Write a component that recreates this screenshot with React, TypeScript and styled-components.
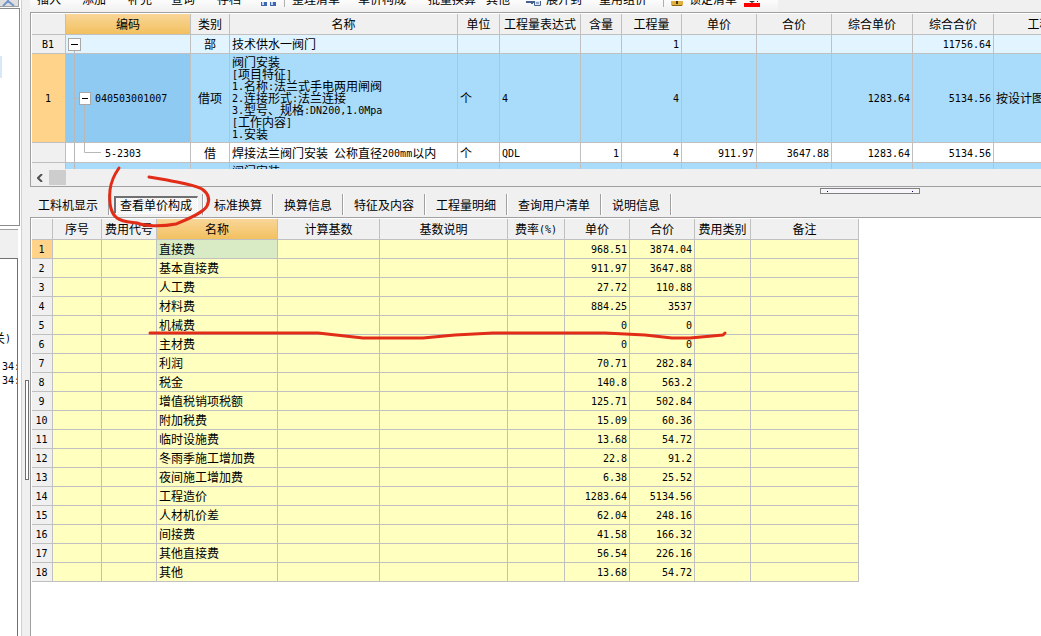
import React from "react";
import styled, { createGlobalStyle } from "styled-components";

const GlobalStyle = createGlobalStyle`
  * { box-sizing: border-box; }
  html, body, #root { height: 100%; }
  body {
    margin: 0;
    overflow: hidden;
    background: #f0f0f0;
    color: #000;
    font: 12px/16px "Noto Sans CJK SC", sans-serif;
  }
  button { font: inherit; color: inherit; background: none; border: 0; padding: 0; }
`;

const Shell = styled.div`
  position: relative;
  display: flex;
  height: 100%;
  overflow: hidden;
`;

const Sidebar = styled.aside`
  display: flex;
  flex-direction: column;
  flex: none;
  width: 22px;
  background: #fff;
  border-right: 1px solid #d0d0d0;
`;

const CollapseButton = styled.button`
  display: flex;
  align-items: flex-end;
  width: 19px;
  height: 7px;
  overflow: hidden;
  background: #dfdfdf;
  border-right: 1px solid #a0a0a0;
  border-bottom: 1px solid #a0a0a0;
`;

const TreePanel = styled.div`
  width: 20px;
  height: 218px;
  margin-top: 1px;
  padding-top: 47px;
  border: solid #8a8a8a;
  border-width: 1px 1px 1px 0;
`;

const TreeSelection = styled.div`
  width: 2px;
  height: 22px;
  background: #d9e8f7;
`;

const PanelHeading = styled.div`
  width: 18px;
  height: 29px;
  margin-top: 3px;
  background: #f0f0f0;
  border-top: 1px solid #a0a0a0;
`;

const NotesPanel = styled.div`
  flex: 1;
  width: 18px;
  padding-top: 72px;
  overflow: hidden;
  border: solid #707070;
  border-width: 1px 1px 0 0;
  line-height: 14px;
`;

const NoteLine = styled.div`
  height: 14px;
  padding-left: 2px;
  overflow: hidden;
  white-space: nowrap;
`;

const NoteTail = styled(NoteLine)`
  display: flex;
  justify-content: flex-end;
  margin-bottom: 14px;
  padding: 0 6px 0 0;
`;

const VerticalSplitter = styled.div`
  flex: none;
  width: 8px;
  padding: 380px 1px 0 3px;
`;

const VerticalGrip = styled.div`
  height: 100px;
  border: 1px solid #707070;
  background: #fff;
`;

const Main = styled.main`
  display: flex;
  flex: 1;
  flex-direction: column;
  min-width: 0;
`;

const Toolbar = styled.div`
  display: flex;
  flex: none;
  align-items: flex-end;
  width: 748px;
  height: 12px;
  padding: 0 0 5px 7px;
  overflow: hidden;
  background: linear-gradient(#fcfcfc, #f0f0f0);
`;

const ToolButton = styled.button<{ $slot: number }>`
  flex: none;
  width: ${(p) => p.$slot}px;
  height: 16px;
  text-align: left;
  white-space: nowrap;
`;

const ToolIcon = styled.button<{ $slot: number }>`
  display: flex;
  flex: none;
  align-items: flex-end;
  width: ${(p) => p.$slot}px;
`;

const ToolSeparator = styled.span`
  flex: none;
  width: 8px;
  height: 7px;
  border-left: 1px solid #b0b0b0;
`;

const GridPanel = styled.section`
  flex: none;
  border: solid #a0a0a0;
  border-width: 1px 0 1px 1px;
`;

const GridClip = styled.div`
  height: 156px;
  padding: 1px 0 0 1px;
  overflow: hidden;
  background: #fff;
`;

const Table = styled.table<{ $width: number }>`
  width: ${(p) => p.$width}px;
  table-layout: fixed;
  border-collapse: separate;
  border-spacing: 0;
`;

const HeadCell = styled.th<{ $active?: boolean }>`
  height: 21px;
  padding: 0;
  overflow: hidden;
  font-weight: 400;
  line-height: 18px;
  white-space: nowrap;
  background: ${(p) => (p.$active ? "linear-gradient(#f9d698, #f2c05f)" : "#f0f0f0")};
  border: solid #c0c0c0;
  border-width: 0 1px 1px 0;
`;

const Cell = styled.td<{ $bg: string; $h: number; $align?: string }>`
  height: ${(p) => p.$h}px;
  padding: 0 2px;
  overflow: hidden;
  line-height: 12px;
  text-align: ${(p) => p.$align ?? "left"};
  white-space: pre;
  background: ${(p) => p.$bg};
  border: solid #c0c0c0;
  border-width: 0 1px 1px 0;
`;

const RowHead = styled.th<{ $active?: boolean }>`
  padding: 0 1px 0 0;
  font-weight: 400;
  line-height: 12px;
  background: ${(p) => (p.$active ? "#ffd48a" : "#f0f0f0")};
  border: solid #c0c0c0;
  border-width: 0 1px 1px 0;
`;

const TreeCell = styled(Cell)`
  padding: 0;
`;

const TreeContent = styled.div`
  display: flex;
  align-items: center;
`;

const Narrow = styled.span`
  font-family: "DejaVu Sans Mono", monospace;
  font-size: 10px;
  line-height: 0;
  vertical-align: 1px;
`;

const ScrollBar = styled.div`
  display: flex;
  align-items: center;
  height: 17px;
  padding-left: 6px;
  gap: 5px;
  background: #f0f0f0;
`;

const ScrollArrow = styled.button`
  display: flex;
  width: 7px;
`;

const ScrollThumb = styled.div`
  width: 17px;
  height: 15px;
  background: #cdcdcd;
`;

const HorizontalSplitter = styled.div`
  flex: none;
  height: 7px;
  padding: 1px 0 0 790px;
`;

const HorizontalGrip = styled.div`
  display: flex;
  align-items: center;
  justify-content: space-between;
  width: 100px;
  height: 6px;
  padding: 0 6px;
  background: #f8f6fa;
  border: 1px solid #808080;
`;

const GripDot = styled.span`
  width: 1px;
  height: 1px;
  background: #000080;
`;

const TabStrip = styled.div`
  display: flex;
  flex: none;
  height: 23px;
  padding-bottom: 2px;
`;

const TabSlot = styled.div`
  display: flex;
  align-items: center;
  padding: 0 4px 0 5px;
  border-right: 1px solid #a0a0a0;
  box-shadow: 1px 0 #fff;
  &:first-child { padding-left: 2px; }
`;

const Tab = styled.button<{ $selected?: boolean }>`
  height: 18px;
  padding: ${(p) => (p.$selected ? "0 5px 0 4px" : "0 5px")};
  line-height: 14px;
  white-space: nowrap;
  border: solid transparent;
  border-width: 2px 1px 1px 1px;
  ${(p) =>
    p.$selected &&
    `background: repeating-conic-gradient(#fff 0 25%, #f0f0f0 0 50%) 0 0 / 2px 2px;
     border-color: #707070 #fff #fff #707070;
     border-left-width: 2px;`}
`;

const DetailPanel = styled.section`
  flex: 1;
  min-height: 0;
  padding: 1px 0 0 1px;
  overflow: hidden;
  background: #fff;
  border: solid #a0a0a0;
  border-width: 1px 0 0 1px;
`;

const Annotation = styled.svg`
  position: absolute;
  top: 0;
  left: 0;
  pointer-events: none;
`;

/* Half-width characters take exactly half of a full-width one. */
function Text({ children }: { children: string }) {
  return (
    <span>
      {children.split(/([\x20-\x7e]+)/).map((part, i) =>
        i % 2 ? <Narrow key={i}>{part}</Narrow> : part
      )}
    </span>
  );
}

type ColumnDef = { label: string; width: number; align?: string };

const billColumns: ColumnDef[] = [
  { label: "", width: 34 },
  { label: "编码", width: 125 },
  { label: "类别", width: 39, align: "center" },
  { label: "名称", width: 228 },
  { label: "单位", width: 42 },
  { label: "工程量表达式", width: 81 },
  { label: "含量", width: 41, align: "right" },
  { label: "工程量", width: 60, align: "right" },
  { label: "单价", width: 75, align: "right" },
  { label: "合价", width: 75, align: "right" },
  { label: "综合单价", width: 81, align: "right" },
  { label: "综合合价", width: 81, align: "right" },
  { label: "工程量计算规则", width: 152 },
];

const description = [
  "阀门安装",
  "[项目特征]",
  "1.名称:法兰式手电两用闸阀",
  "2.连接形式:法兰连接",
  "3.型号、规格:DN200,1.0Mpa",
  "[工作内容]",
  "1.安装",
].join("\n");

type BillRow = { head: string; h: number; bg: string; codeBg: string; code: string; cells: string[] };

const billRows: BillRow[] = [
  { head: "B1", h: 19, bg: "#e1f4ff", codeBg: "#e1f4ff", code: "", cells: ["部", "技术供水一阀门", "", "", "", "1", "", "", "", "11756.64", ""] },
  { head: "1", h: 89, bg: "#a9dbfa", codeBg: "#8fcaf2", code: "040503001007", cells: ["借项", description, "个", "4", "", "4", "", "", "1283.64", "5134.56", "按设计图示数量计算"] },
  { head: "", h: 20, bg: "#fff", codeBg: "#fff", code: "5-2303", cells: ["借", "焊接法兰阀门安装 公称直径200mm以内", "个", "QDL", "1", "4", "911.97", "3647.88", "1283.64", "5134.56", ""] },
  { head: "", h: 16, bg: "#a9dbfa", codeBg: "#a9dbfa", code: "", cells: ["", "阀门安装", "", "", "", "", "", "", "", "", ""] },
];

const guide = { stroke: "#b8b8b8", fill: "none" };

const treeGuides = [
  <svg width="29" height="18" viewBox="0 0 29 18">
    <path d="M8.5 15V18" {...guide} />
    <rect x="2.5" y="3.5" width="12" height="12" fill="#fff" stroke="#a8a8a8" />
    <path d="M5 9.5h7" stroke="#000" />
  </svg>,
  <svg width="29" height="88" viewBox="0 0 29 88">
    <path d="M8.5 0V88M8.5 44.5H13M18.5 50V88" {...guide} />
    <rect x="13.5" y="38.5" width="11" height="12" fill="#fff" stroke="#a8a8a8" />
    <path d="M16 44.5h6" stroke="#000" />
  </svg>,
  <svg width="39" height="19" viewBox="0 0 39 19">
    <path d="M8.5 0V19M18.5 0V9.5H35" {...guide} />
  </svg>,
  <svg width="29" height="15" viewBox="0 0 29 15">
    <path d="M8.5 0V15" {...guide} />
  </svg>,
];

const feeColumns: ColumnDef[] = [
  { label: "", width: 21 },
  { label: "序号", width: 49 },
  { label: "费用代号", width: 55 },
  { label: "名称", width: 121 },
  { label: "计算基数", width: 102 },
  { label: "基数说明", width: 128 },
  { label: "费率(%)", width: 57 },
  { label: "单价", width: 65, align: "right" },
  { label: "合价", width: 65, align: "right" },
  { label: "费用类别", width: 56 },
  { label: "备注", width: 108 },
];

const fees: [string, string, string][] = [
  ["直接费", "968.51", "3874.04"],
  ["基本直接费", "911.97", "3647.88"],
  ["人工费", "27.72", "110.88"],
  ["材料费", "884.25", "3537"],
  ["机械费", "0", "0"],
  ["主材费", "0", "0"],
  ["利润", "70.71", "282.84"],
  ["税金", "140.8", "563.2"],
  ["增值税销项税额", "125.71", "502.84"],
  ["附加税费", "15.09", "60.36"],
  ["临时设施费", "13.68", "54.72"],
  ["冬雨季施工增加费", "22.8", "91.2"],
  ["夜间施工增加费", "6.38", "25.52"],
  ["工程造价", "1283.64", "5134.56"],
  ["人材机价差", "62.04", "248.16"],
  ["间接费", "41.58", "166.32"],
  ["其他直接费", "56.54", "226.16"],
  ["其他", "13.68", "54.72"],
];

const tabs = ["工料机显示", "查看单价构成", "标准换算", "换算信息", "特征及内容", "工程量明细", "查询用户清单", "说明信息"];

function TableHead({ columns, active }: { columns: ColumnDef[]; active: string }) {
  return (
    <>
      <colgroup>
        {columns.map((c, i) => (
          <col key={i} width={c.width} />
        ))}
      </colgroup>
      <thead>
        <tr>
          {columns.map((c, i) => (
            <HeadCell key={i} scope="col" $active={c.label === active}>
              <Text>{c.label}</Text>
            </HeadCell>
          ))}
        </tr>
      </thead>
    </>
  );
}

const totalWidth = (columns: ColumnDef[]) => columns.reduce((sum, c) => sum + c.width, 0);

function BillTable() {
  return (
    <Table $width={totalWidth(billColumns)}>
      <TableHead columns={billColumns} active="编码" />
      <tbody>
        {billRows.map((row, r) => (
          <tr key={r}>
            <RowHead scope="row" $active={row.head === "1"}>
              <Text>{row.head}</Text>
            </RowHead>
            <TreeCell $bg={row.codeBg} $h={row.h}>
              <TreeContent>
                {treeGuides[r]}
                <Text>{row.code}</Text>
              </TreeContent>
            </TreeCell>
            {row.cells.map((value, i) => (
              <Cell key={i} $bg={row.bg} $h={row.h} $align={billColumns[i + 2].align}>
                <Text>{value}</Text>
              </Cell>
            ))}
          </tr>
        ))}
      </tbody>
    </Table>
  );
}

function FeeTable() {
  return (
    <Table $width={totalWidth(feeColumns)}>
      <TableHead columns={feeColumns} active="名称" />
      <tbody>
        {fees.map(([name, unit, total], r) => (
          <tr key={name}>
            <RowHead scope="row" $active={r === 0}>
              <Text>{String(r + 1)}</Text>
            </RowHead>
            {["", "", name, "", "", "", unit, total, "", ""].map((value, i) => (
              <Cell key={i} $h={19} $bg={r === 0 && i === 2 ? "#d9ebc5" : "#ffffc0"} $align={feeColumns[i + 1].align}>
                <Text>{value}</Text>
              </Cell>
            ))}
          </tr>
        ))}
      </tbody>
    </Table>
  );
}

export default function App() {
  return (
    <>
      <GlobalStyle />
      <Shell>
        <Sidebar>
          <CollapseButton aria-label="折叠">
            <svg width="18" height="6" viewBox="0 0 18 6">
              <path d="M3 6l5-5 6 5M8 0v2" stroke="#7797cc" strokeWidth="2" fill="none" />
            </svg>
          </CollapseButton>
          <TreePanel>
            <TreeSelection />
          </TreePanel>
          <PanelHeading />
          <NotesPanel>
            <NoteTail>
              <Text>关)</Text>
            </NoteTail>
            <NoteLine>
              <Text>34:</Text>
            </NoteLine>
            <NoteLine>
              <Text>34:</Text>
            </NoteLine>
          </NotesPanel>
        </Sidebar>
        <VerticalSplitter>
          <VerticalGrip />
        </VerticalSplitter>
        <Main>
          <Toolbar>
            <ToolButton $slot={45}>插入</ToolButton>
            <ToolButton $slot={46}>添加</ToolButton>
            <ToolButton $slot={43}>补充</ToolButton>
            <ToolButton $slot={46}>查询</ToolButton>
            <ToolButton $slot={44}>存档</ToolButton>
            <ToolIcon $slot={23} aria-label="查找">
              <svg width="16" height="5" viewBox="0 0 16 5">
                <path d="M0 0h6v4H0zM9 0h6v4H9z" fill="#3f66b0" />
                <path d="M1 0h2v3H1zM10 0h2v3h-2z" fill="#c4d6f2" />
              </svg>
            </ToolIcon>
            <ToolSeparator />
            <ToolButton $slot={66}>整理清单</ToolButton>
            <ToolButton $slot={70}>单价构成</ToolButton>
            <ToolButton $slot={58}>批量换算</ToolButton>
            <ToolButton $slot={40}>其他</ToolButton>
            <ToolIcon $slot={20} aria-label="展开">
              <svg width="16" height="6" viewBox="0 0 16 6">
                <path d="M0 1h8M6 0v3" stroke="#44608f" strokeWidth="2" />
                <path d="M8.5 0v4.5h6V0" stroke="#44608f" fill="#dce8fa" />
                <path d="M10 2h3" stroke="#44608f" />
              </svg>
            </ToolIcon>
            <ToolButton $slot={53}>展开到</ToolButton>
            <ToolButton $slot={64}>重用组价</ToolButton>
            <ToolSeparator />
            <ToolIcon $slot={18} aria-label="锁定">
              <svg width="12" height="6" viewBox="0 0 12 6">
                <path d="M0 0h12v4l-1 1H1L0 4z" fill="#e0b040" />
                <path d="M1 4.5h10" stroke="#8a6514" />
                <path d="M6 0v3" stroke="#4a3505" strokeWidth="2" />
              </svg>
            </ToolIcon>
            <ToolButton $slot={55}>锁定清单</ToolButton>
            <ToolIcon $slot={16} aria-label="颜色">
              <svg width="16" height="6" viewBox="0 0 16 6">
                <path d="M5 0h6L8 2zM13 0h1v1h-1z" fill="#333" />
                <path d="M0 2h16v4H0z" fill="#f00" />
              </svg>
            </ToolIcon>
          </Toolbar>
          <GridPanel>
            <GridClip>
              <BillTable />
            </GridClip>
            <ScrollBar>
              <ScrollArrow aria-label="向左滚动">
                <svg width="7" height="8" viewBox="0 0 7 8">
                  <path d="M5 0L1 4l4 4" stroke="#505050" strokeWidth="2" fill="none" />
                </svg>
              </ScrollArrow>
              <ScrollThumb />
            </ScrollBar>
          </GridPanel>
          <HorizontalSplitter>
            <HorizontalGrip>
              <GripDot />
              <GripDot />
            </HorizontalGrip>
          </HorizontalSplitter>
          <TabStrip role="tablist">
            {tabs.map((label) => (
              <TabSlot key={label} role="presentation">
                <Tab role="tab" aria-selected={label === "查看单价构成"} $selected={label === "查看单价构成"}>
                  {label}
                </Tab>
              </TabSlot>
            ))}
          </TabStrip>
          <DetailPanel>
            <FeeTable />
          </DetailPanel>
        </Main>
        <Annotation width="740" height="350" viewBox="0 0 740 350" aria-hidden="true">
          <g fill="none" stroke="#e12c18" strokeWidth="3" strokeLinecap="round" strokeLinejoin="round">
            <path d="M119 168C114 175 111 182 110 190C109 202 110 213 117 218C122 222 130 222 137 223C144 226 160 227 176 224C188 219 203 213 207 206C210 200 209 194 202 189C192 184 181 183 167 180L149 177" />
            <path d="M150 333H318L345 336L363 338H423L455 335L493 333H605L645 335L672 338H690L712 336L723 335L725 333" />
          </g>
        </Annotation>
      </Shell>
    </>
  );
}
